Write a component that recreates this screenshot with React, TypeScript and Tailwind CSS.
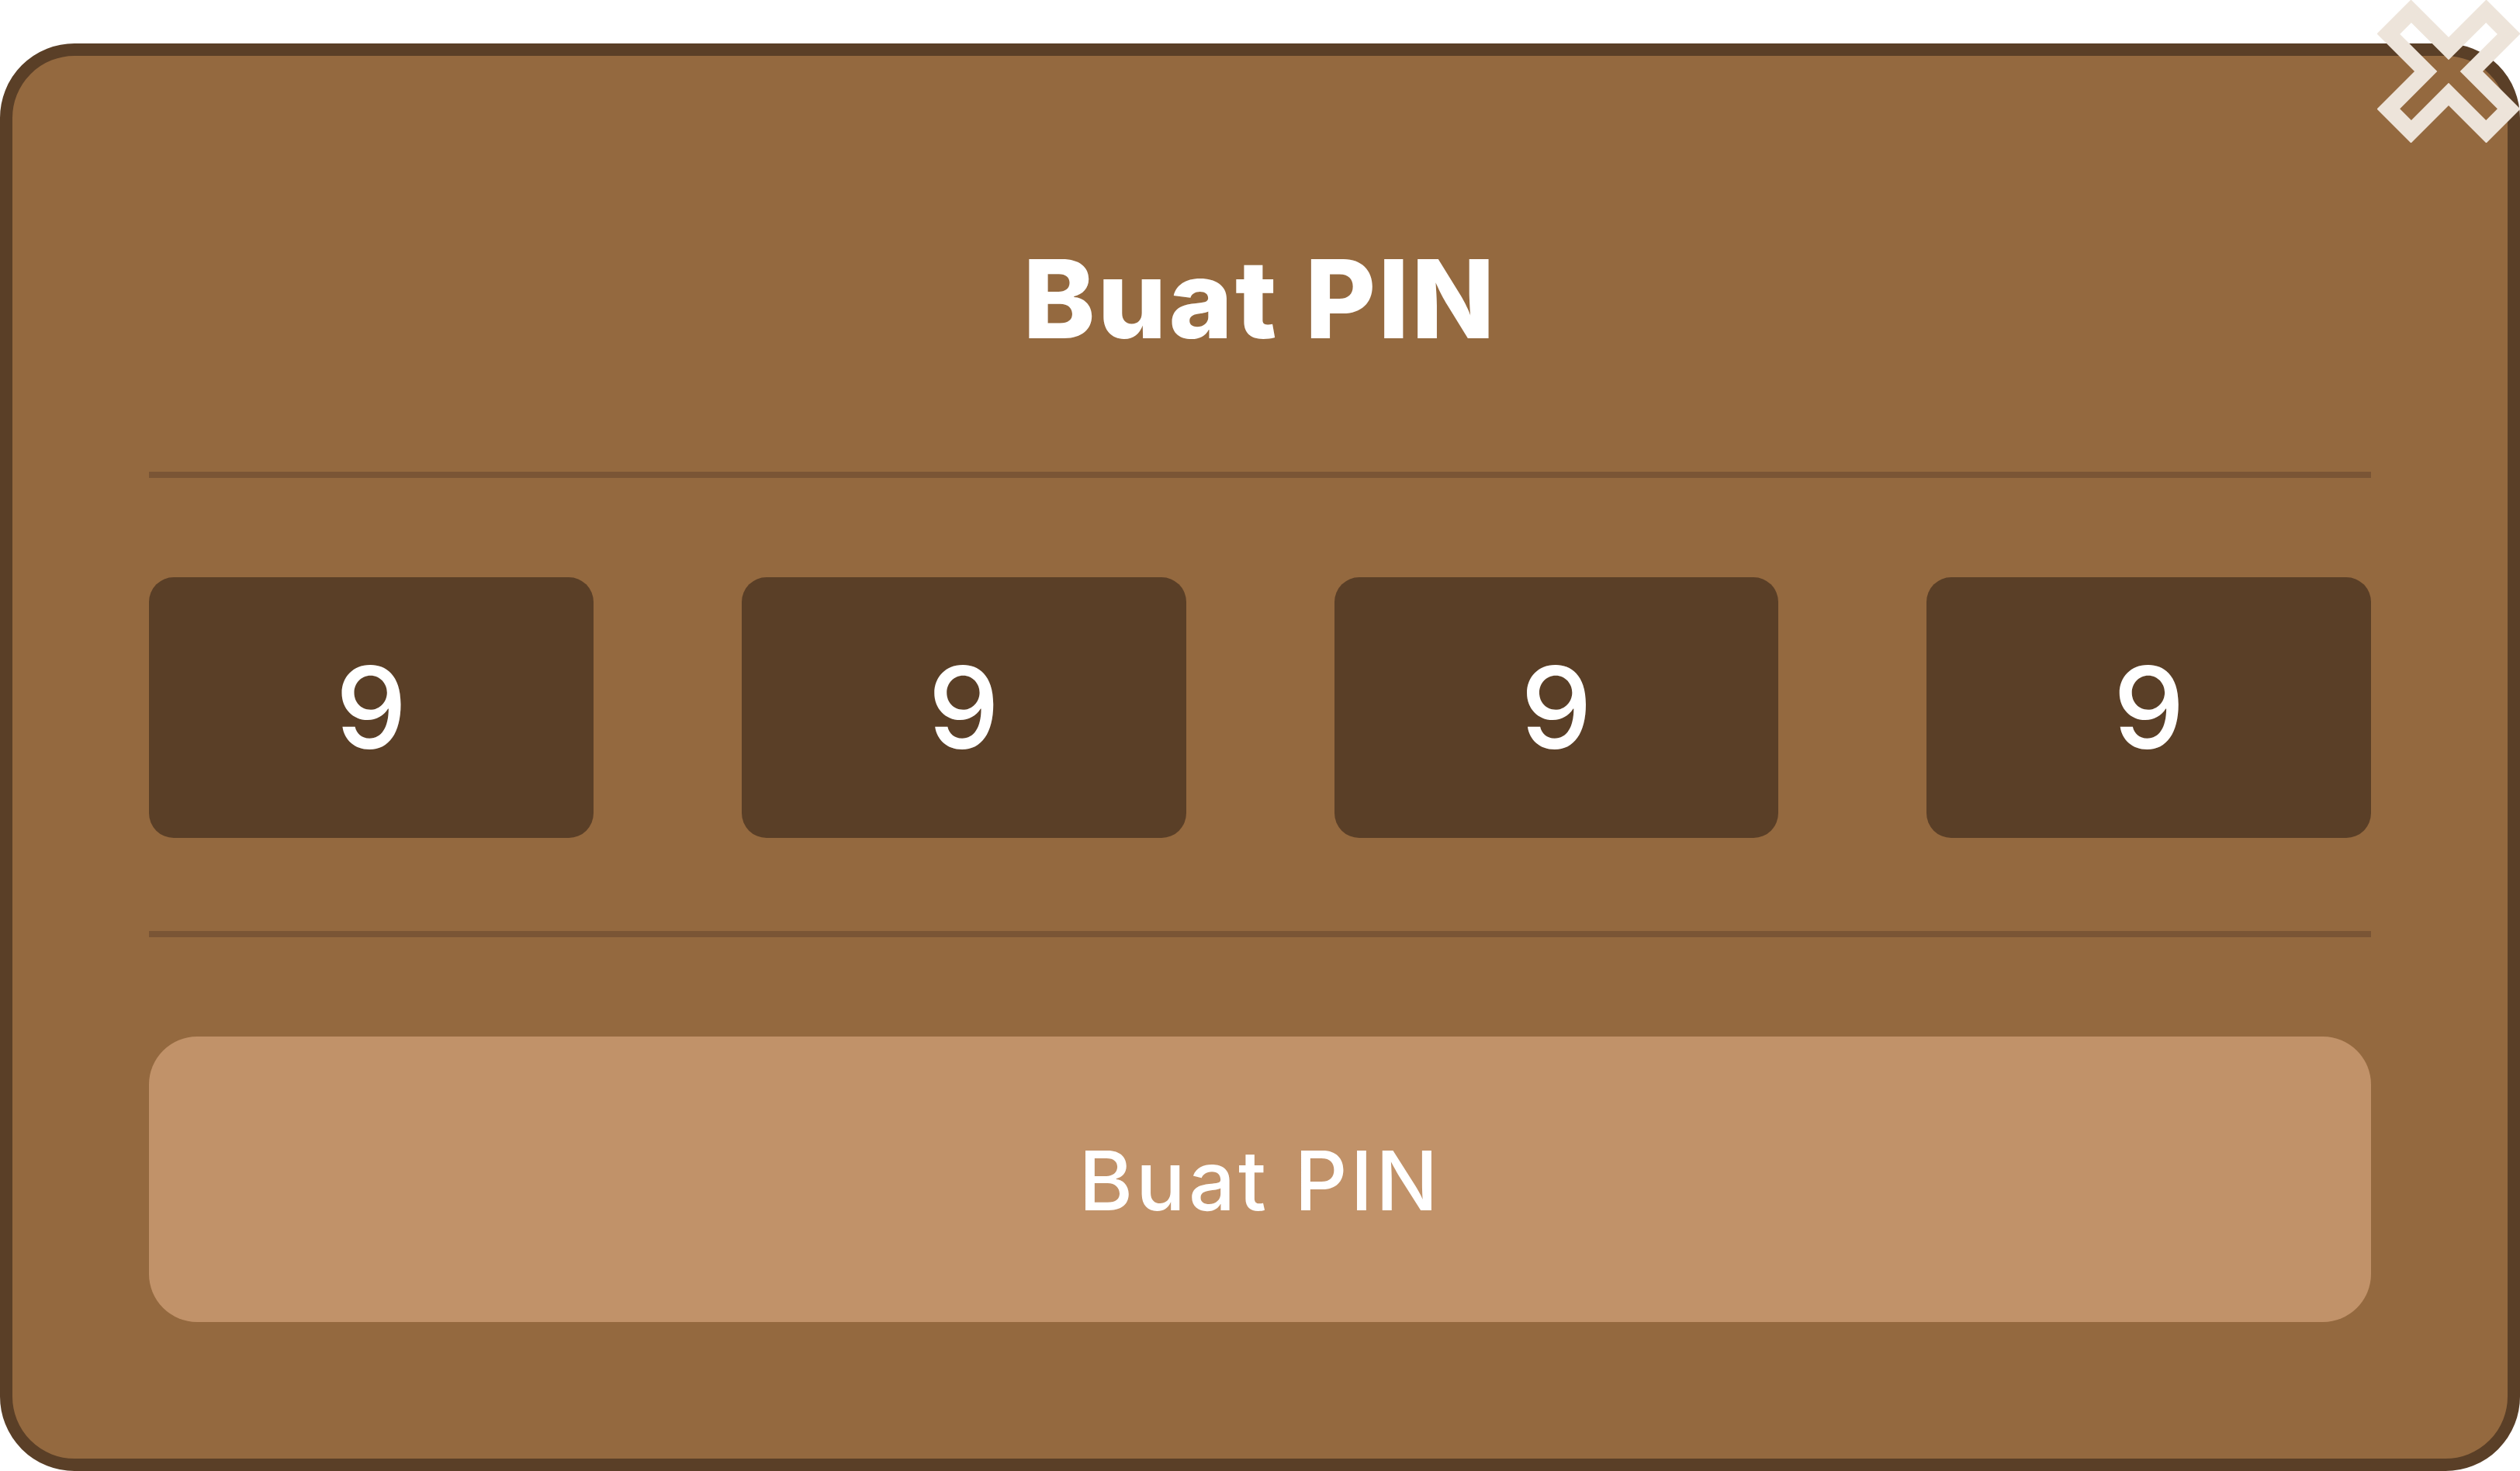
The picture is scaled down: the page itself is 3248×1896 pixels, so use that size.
import { useState } from "react";

const CloseIcon = () => (
  <svg width="184" height="184" viewBox="0 0 184 184" className="block">
    <path
      fillRule="evenodd"
      fill="#ede4da"
      d="M140.5 184.5 L92 136 L43.5 184.5 L-0.5 140.5 L48 92 L-0.5 43.5 L43.5 -0.5 L92 48 L140.5 -0.5 L184.5 43.5 L136 92 L184.5 140.5 Z M140.2 154.9 L92 106.7 L43.9 154.9 L29.2 140.2 L77.3 92 L29.2 43.9 L43.9 29.2 L92 77.3 L140.2 29.2 L154.9 43.9 L106.7 92 L154.9 140.2 Z"
    />
  </svg>
);

const App = () => {
  const [pin] = useState(["9", "9", "9", "9"]);

  return (
    <div className="relative w-[3248px] h-[1896px] bg-white pt-[56px] font-['Inter','Liberation_Sans',sans-serif]">
      <div className="h-[1840px] border-[16px] border-[#5a3f27] bg-[#94693f] rounded-[96px] px-[176px] flex flex-col">
        <div className="h-[536px] pt-[90px] flex items-center justify-center">
          <h1 className="text-[140px] leading-none font-extrabold tracking-[3px] text-white">Buat PIN</h1>
        </div>

        <div className="h-[8px] bg-[#7a5535]" />

        <div className="mt-[128px] grid grid-cols-4 gap-[191px]">
          {pin.map((d, i) => (
            <div
              key={i}
              className="h-[336px] rounded-[32px] bg-[#5a3f27] flex items-center justify-center text-white text-[146px] font-medium leading-none"
            >
              {d}
            </div>
          ))}
        </div>

        <div className="mt-[120px] h-[8px] bg-[#7a5535]" />

        <button
          type="button"
          className="mt-[128px] h-[368px] pt-[4px] rounded-[62px] bg-[#c19269] text-white text-[106px] font-medium tracking-[4px] leading-none flex items-center justify-center"
        >
          Buat PIN
        </button>
      </div>

      <div className="absolute top-0 left-[3064px]">
        <CloseIcon />
      </div>
    </div>
  );
};

export default App;
